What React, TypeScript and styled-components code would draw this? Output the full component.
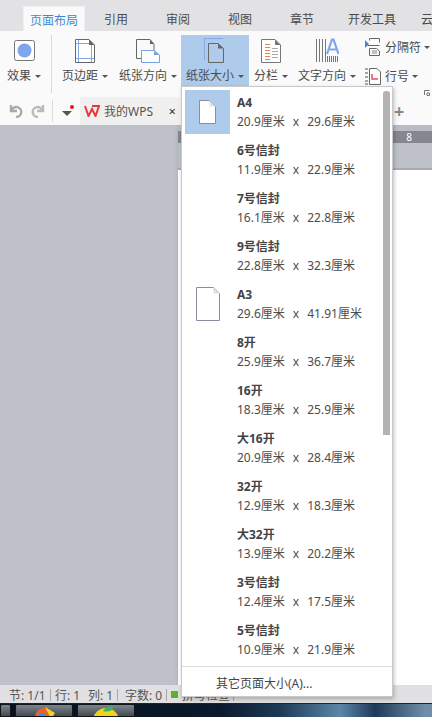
import * as React from 'react';
import styled, { createGlobalStyle } from 'styled-components';

const Global = createGlobalStyle`
  html, body { margin: 0; padding: 0; overflow: hidden; }
  body { font-family: "Noto Sans", "Noto Sans CJK SC", sans-serif; font-size: 12px; color: #444; }
  * { box-sizing: border-box; }
`;

const Win = styled.div`
  width: 432px; height: 717px; position: relative; overflow: hidden;
  display: flex; flex-direction: column; background: #bfc1ca;
`;
const TabBar = styled.div`
  height: 31px; flex: none; background: #e2e2e4; display: flex; align-items: flex-end; padding-left: 23px;
`;
const Tab = styled.div<{ $active?: boolean; $w?: number }>`
  width: ${p => p.$w || 62}px; height: 25px; flex: none; text-align: center; line-height: 27px;
  font-size: 12px; white-space: nowrap; color: ${p => (p.$active ? '#3f87d0' : '#4a4a4a')};
  background: ${p => (p.$active ? '#fafafa' : 'none')};
  border: ${p => (p.$active ? '1px solid #f0f0f2' : 'none')}; border-bottom: none;
`;
const Ribbon = styled.div`
  height: 66px; flex: none; background: #fafafa; display: flex; padding-top: 4px; align-items: flex-start; position: relative;
`;
const Launcher = styled.svg`
  position: absolute; right: 2px; bottom: 1px; display: block;
`;
const Divider = styled.div`
  width: 1px; height: 58px; background: #d8d8da; flex: none; margin: 0 8px 0 9px;
`;
const Btn = styled.div<{ $w: number; $active?: boolean; $ml?: number }>`
  width: ${p => p.$w}px; margin-left: ${p => p.$ml || 0}px; height: 53px; flex: none; display: flex; flex-direction: column;
  align-items: center; background: ${p => (p.$active ? '#aecbec' : 'none')}; overflow: hidden;
  svg { display: block; flex: none; }
`;
const BtnLabel = styled.div`
  font-size: 12px; line-height: 16px; margin-top: 5px; white-space: nowrap; color: #4a4a4a;
  display: flex; align-items: center; gap: 4px;
`;
const Caret = styled.span`
  display: inline-block; width: 0; height: 0; border: 3px solid transparent; border-top: 3px solid #555; border-bottom: none;
`;
const SideCol = styled.div`
  margin-left: 5px; display: flex; flex-direction: column; gap: 5px;
`;
const SideBtn = styled.div`
  display: flex; align-items: center; gap: 3px; height: 24px; white-space: nowrap; color: #4a4a4a;
  svg { flex: none; }
`;
const QuickBar = styled.div`
  height: 28px; flex: none; background: #fafafa; display: flex; align-items: center; padding-left: 9px;
`;
const QuickIcon = styled.svg<{ $mr: number }>`
  display: block; flex: none; margin-right: ${p => p.$mr}px;
`;
const QuickSep = styled.div`
  width: 1px; height: 22px; background: #dcdcde; margin-right: 8px; flex: none;
`;
const DocTab = styled.div`
  width: 100px; height: 28px; flex: none; background: #f0f0f0; display: flex; align-items: center; padding: 0 4px; gap: 4px; color: #555;
`;
const DocClose = styled.span`
  margin-left: auto; font-size: 13px; color: #333;
`;
const NewTab = styled.span`
  margin-left: 214px; font-size: 18px; line-height: 18px; color: #888; font-weight: 700;
`;
const Workspace = styled.div`
  flex: 1; display: flex; min-height: 0;
`;
const Gutter = styled.div`
  width: 178px; flex: none; background: #bfc1ca; box-shadow: inset -3px 0 3px -2px #aeb0b8;
`;
const PageCol = styled.div`
  flex: 1; display: flex; flex-direction: column;
`;
const RulerTop = styled.div`
  height: 6px; background: #b9bbc5;
`;
const Ruler = styled.div`
  height: 12px; background: #858690; color: #fff; font-size: 10px; line-height: 12px; text-align: right; padding-right: 20px;
`;
const RulerBottom = styled.div`
  height: 27px; background: #bfc1ca; border-bottom: 2px solid #a9abb3;
`;
const Page = styled.div`
  flex: 1; background: #fff;
`;
const StatusBar = styled.div`
  height: 18px; flex: none; background: #e0e0e2; display: flex; align-items: center; padding: 1px 0 0 9px;
  font-size: 12px; color: #555; white-space: nowrap;
`;
const StatusItem = styled.span<{ $w: number; $pl?: number }>`
  width: ${p => p.$w}px; padding-left: ${p => p.$pl || 0}px; flex: none;
`;
const StatusSep = styled.span`
  width: 1px; height: 12px; background: #a8a8a8; flex: none; margin-right: 4px;
`;
const GreenDot = styled.span`
  width: 7px; height: 7px; background: #5bb030; flex: none; margin-right: 4px;
`;
const SpellCheck = styled.span`
  margin-right: 3px;
`;
const Taskbar = styled.div`
  height: 14px; flex: none; display: flex; gap: 4px; overflow: hidden;
  background: linear-gradient(90deg, #06101c 0, #0a1a2c 220px, #1d3a55 280px, #5d85a8 340px, #1e3a58 375px, #6f8ca8 425px);
  border-top: 1px solid #20242c;
`;
const TaskBtn = styled.div<{ $w: number }>`
  width: ${p => p.$w}px; flex: none; display: flex; justify-content: center;
  background: linear-gradient(#7d848c, #454b52); border: 1px solid #11161d; border-radius: 2px 2px 0 0; overflow: hidden;
`;
const Menu = styled.div`
  position: absolute; left: 181px; top: 86px; width: 212px; height: 611px; background: #fff;
  border: 1px solid #c9c9c9; box-shadow: 1px 2px 4px rgba(0,0,0,.25); display: flex; flex-direction: column;
`;
const MenuList = styled.div`
  height: 579px; padding: 3px 0 0 3px; position: relative;
`;
const Thumb = styled.div`
  position: absolute; right: 2px; top: 4px; width: 7px; height: 344px; background: #b3b3b3; border-radius: 3px 3px 0 0;
`;
const SizeRow = styled.div`
  height: 48px; display: flex;
`;
const SizeIcon = styled.div<{ $active?: boolean }>`
  width: 45px; height: 44px; flex: none; display: flex; align-items: center; justify-content: center;
  background: ${p => (p.$active ? '#aecbec' : 'none')};
`;
const SizeText = styled.div`
  margin-left: 7px; padding-top: 4px;
`;
const SizeName = styled.div`
  font-weight: 700; font-size: 12px; line-height: 17px; color: #444;
`;
const SizeDim = styled.div`
  font-size: 12px; line-height: 20px; margin-top: 1px; color: #4c4c4c; display: flex; white-space: nowrap;
`;
const Cross = styled.span`
  margin: 0 8px;
`;
const MenuFoot = styled.div`
  border-top: 1px solid #dcdcdc; flex: 1; padding: 8px 0 0 34px; line-height: 17px; color: #444;
`;

const sizes = [
  ['A4', '20.9', '29.6'], ['6号信封', '11.9', '22.9'], ['7号信封', '16.1', '22.8'], ['9号信封', '22.8', '32.3'],
  ['A3', '29.6', '41.91'], ['8开', '25.9', '36.7'], ['16开', '18.3', '25.9'], ['大16开', '20.9', '28.4'],
  ['32开', '12.9', '18.3'], ['大32开', '13.9', '20.2'], ['3号信封', '12.4', '17.5'], ['5号信封', '10.9', '21.9'],
];

const Sheet = ({ w, h }: { w: number; h: number }) => (
  <svg width={w} height={h} viewBox={`0 0 ${w} ${h}`}>
    <path d={`M.5 .5H${w - 6.5}L${w - .5} 6.5V${h - .5}H.5Z`} fill="#fff" stroke="#8f8a9e" />
    <path d={`M${w - 6.5} .5V6.5H${w - .5}Z`} fill="#dfe0ee" />
  </svg>
);

export default function App() {
  return (
    <Win>
      <Global />
      <TabBar>
        <Tab $active>页面布局</Tab>
        <Tab>引用</Tab>
        <Tab>审阅</Tab>
        <Tab>视图</Tab>
        <Tab>章节</Tab>
        <Tab $w={78}>开发工具</Tab>
        <Tab $w={32}>云</Tab>
      </TabBar>
      <Ribbon>
        <Btn $w={36} $ml={6}>
          <svg width="24" height="28" viewBox="0 0 24 28">
            <rect x="2.500" y="5.500" width="20" height="20" rx="2" fill="#fff" stroke="#777" />
            <circle cx="12.500" cy="15.500" r="7" fill="#7da6ef" />
          </svg>
          <BtnLabel>效果<Caret /></BtnLabel>
        </Btn>
        <Divider />
        <Btn $w={50}>
          <svg width="20" height="28" viewBox="0 0 20 28">
            <path d="M.5 4.500H14L19.500 10V27.500H.5Z" fill="#fff" stroke="#666" />
            <path d="M14 4.500V10H19.500Z" fill="#666" />
            <path d="M3.500 5V27M16.500 10V27M1 8.500H14M1 23.500H19" stroke="#86a8e6" fill="none" />
          </svg>
          <BtnLabel>页边距<Caret /></BtnLabel>
        </Btn>
        <Btn $w={60} $ml={8}>
          <svg width="24" height="28" viewBox="0 0 24 28">
            <path d="M5 23.500H.5V4.500H14L18 9V15" fill="none" stroke="#666" />
            <path d="M14 4.500V9H18Z" fill="#666" />
            <path d="M5.500 15.500H18L23.500 20V27.500H5.500Z" fill="#fff" stroke="#7aa0e0" />
            <path d="M18 15.500V20H23.500Z" fill="#7aa0e0" />
          </svg>
          <BtnLabel>纸张方向<Caret /></BtnLabel>
        </Btn>
        <Btn $w={68} $ml={3} $active>
          <svg width="30" height="28" viewBox="0 0 30 28">
            <path d="M4.500 3.500H23M4.500 3.500V25" stroke="#86a8e6" fill="none" />
            <path d="M8.500 8.500H18L23.500 13.500V27.500H8.500Z" fill="#aecbec" stroke="#666" />
            <path d="M18 8.500V13.500H23.500Z" fill="#666" />
          </svg>
          <BtnLabel>纸张大小<Caret /></BtnLabel>
        </Btn>
        <Btn $w={36} $ml={4}>
          <svg width="20" height="28" viewBox="0 0 20 28">
            <path d="M.5 4.500H14L19.500 10V27.500H.5Z" fill="#fff" stroke="#777" />
            <path d="M14 4.500V10H19.500Z" fill="#777" />
            <path d="M4 9.500H9M4 12.500H9M4 15.500H9M4 18.500H9M4 21.500H9M4 24.500H9" stroke="#f08040" />
            <path d="M11 13.500H17M11 16.500H17M11 19.500H17M11 22.500H17" stroke="#aaa" />
          </svg>
          <BtnLabel>分栏<Caret /></BtnLabel>
        </Btn>
        <Btn $w={64} $ml={6}>
          <svg width="24" height="28" viewBox="0 0 24 28">
            <path d="M1.500 4V27M4.500 4V27M7.500 4V27M10.500 4V27" stroke="#777" />
            <path d="M12 19L17 4.500H18.500L23.500 19M13.500 14.500H22" stroke="#7da6ef" strokeWidth="2.200" fill="none" />
            <path d="M12.500 21V27M14.500 21V27M16.500 21V27M18.500 21V27M20.500 21V27M22.500 21V27" stroke="#777" />
          </svg>
          <BtnLabel>文字方向<Caret /></BtnLabel>
        </Btn>
        <SideCol>
          <SideBtn>
            <svg width="18" height="20" viewBox="0 0 18 20">
              <path d="M1 3L5 7L1 11Z" fill="#4f80d8" />
              <path d="M5.500 3.500V1.500H15.500V5.500M3.500 8.500H15.500M5.500 11.500H12.500L15.500 14V18.500H5.500Z" fill="none" stroke="#666" />
              <path d="M8 14H13M8 16H13" stroke="#888" />
            </svg>
            <span>分隔符</span><Caret />
          </SideBtn>
          <SideBtn>
            <svg width="18" height="20" viewBox="0 0 18 20">
              <path d="M5.500 2.500H13L16.500 6V18.500H5.500Z" fill="#fff" stroke="#666" />
              <path d="M8 8V13H14" stroke="#e05060" strokeWidth="1.500" fill="none" />
              <path d="M1 3H4M1 7H4M1 11H4M1 15H4M1 18H4" stroke="#555" />
            </svg>
            <span>行号</span><Caret />
          </SideBtn>
        </SideCol>
        <Launcher width="6" height="6" viewBox="0 0 6 6">
          <path d="M.5 5V.5H5.500M3 3H5.500V5.500H3Z" fill="none" stroke="#777" />
        </Launcher>
      </Ribbon>
      <QuickBar>
        <QuickIcon $mr={8} width="14" height="14" viewBox="0 0 14 14">
          <path d="M2 1V7H8M2.500 6.500A5 5 0 1 1 7 13" stroke="#aaa" strokeWidth="2.400" fill="none" />
        </QuickIcon>
        <QuickIcon $mr={7} width="14" height="14" viewBox="0 0 14 14">
          <path d="M12 1V7H6M11.500 6.500A5 5 0 1 0 7 13" stroke="#bbb" strokeWidth="2.400" fill="none" />
        </QuickIcon>
        <QuickSep />
        <QuickIcon $mr={5} width="14" height="14" viewBox="0 0 14 14">
          <path d="M1 7H11L6 12Z" fill="#555" />
          <circle cx="11" cy="3" r="2" fill="#e8141e" />
        </QuickIcon>
        <DocTab>
          <svg width="16" height="12" viewBox="0 0 16 12">
            <path d="M1 1L4.500 11L8 4L11.500 11L15 1L8 1" fill="none" stroke="#e6393c" strokeWidth="2" />
          </svg>
          <span>我的WPS</span>
          <DocClose>×</DocClose>
        </DocTab>
        <NewTab>+</NewTab>
      </QuickBar>
      <Workspace>
        <Gutter />
        <PageCol>
          <RulerTop />
          <Ruler>8</Ruler>
          <RulerBottom />
          <Page />
        </PageCol>
      </Workspace>
      <StatusBar>
        <StatusItem $w={41}>节: 1/1</StatusItem>
        <StatusSep />
        <StatusItem $w={33}>行: 1</StatusItem>
        <StatusItem $w={29}>列: 1</StatusItem>
        <StatusSep />
        <StatusItem $w={44} $pl={3}>字数: 0</StatusItem>
        <StatusSep />
        <GreenDot />
        <SpellCheck>拼写检查</SpellCheck>
        <StatusSep />
      </StatusBar>
      <Taskbar>
        <TaskBtn $w={11} />
        <TaskBtn $w={58}>
          <svg width="26" height="14" viewBox="0 0 26 14">
            <circle cx="13" cy="12" r="9" fill="#e8632a" />
            <path d="M14 2L24 8L20 14Z" fill="#f8d020" />
            <circle cx="11" cy="13" r="5" fill="#3f8fe8" />
          </svg>
        </TaskBtn>
        <TaskBtn $w={58}>
          <svg width="28" height="14" viewBox="0 0 28 14">
            <circle cx="14" cy="16" r="13" fill="#f3d21a" />
            <path d="M11 6Q15 0 22 2Q19 8 11 6Z" fill="#35b36c" />
          </svg>
        </TaskBtn>
      </Taskbar>
      <Menu>
        <MenuList>
          <Thumb />
          {sizes.map(([name, w, h], i) => (
            <SizeRow key={name}>
              <SizeIcon $active={i === 0}>
                {name === 'A4' && <Sheet w={17} h={24} />}
                {name === 'A3' && <Sheet w={24} h={34} />}
              </SizeIcon>
              <SizeText>
                <SizeName>{name}</SizeName>
                <SizeDim>{w}厘米<Cross>x</Cross>{h}厘米</SizeDim>
              </SizeText>
            </SizeRow>
          ))}
        </MenuList>
        <MenuFoot>其它页面大小(A)...</MenuFoot>
      </Menu>
    </Win>
  );
}
